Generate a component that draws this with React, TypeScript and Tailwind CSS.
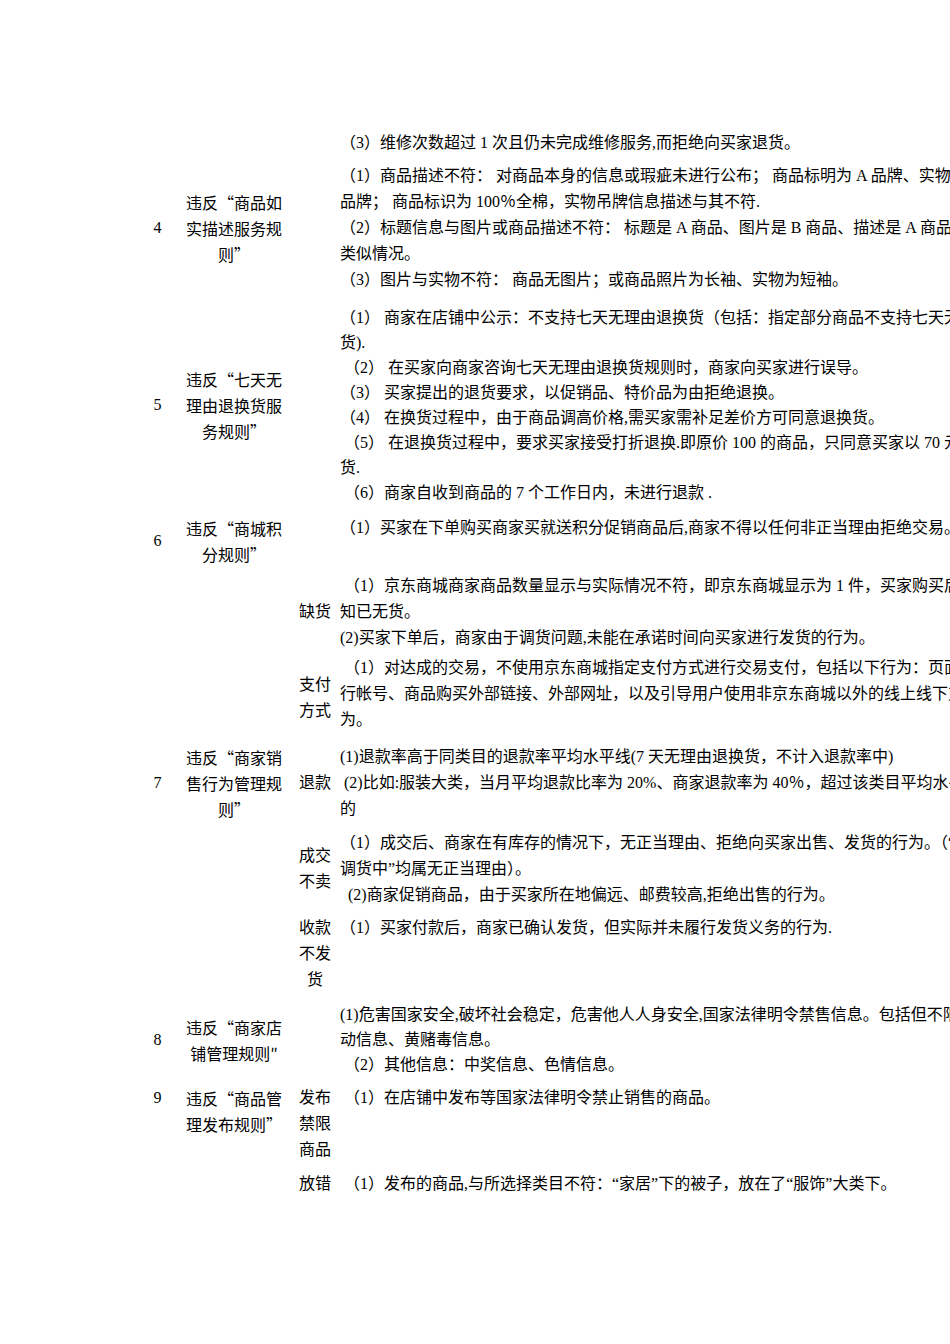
import React from 'react';

// one table row: number | rule name | (sub label | lines)...
type Group = {
  label?: string[];
  labelClass?: string;
  lines: string[];
  lh?: string;
  gap?: string;
  top?: boolean;
};

function Lines({ lines, lh = 'leading-[26px]' }: { lines: string[]; lh?: string }) {
  return (
    <div className="flex flex-col">
      {lines.map((t, i) => (
        <div key={i} className={`${lh} whitespace-pre`}>
          {t}
        </div>
      ))}
    </div>
  );
}

function Row({
  no,
  name,
  groups,
  gap,
  alignTop,
}: {
  no?: string;
  name?: string[];
  groups: Group[];
  gap: string;
  alignTop?: boolean;
}) {
  return (
    <div className={`flex ${gap}`}>
      <div className={`w-[35px] shrink-0 flex flex-col items-center ${alignTop ? 'justify-start' : 'justify-center'}`}>
        {no && <div className="leading-[26px]">{no}</div>}
      </div>
      <div
        className={`w-[118px] shrink-0 flex flex-col items-center text-center font-['Noto_Sans_CJK_SC',sans-serif] ${
          alignTop ? 'justify-start' : 'justify-center'
        }`}
      >
        {name && <Lines lines={name} />}
      </div>
      <div className="flex-1 min-w-0 flex flex-col">
        {groups.map((g, i) => (
          <div key={i} className={`flex ${g.gap ?? ''}`}>
            <div
              className={`w-[44px] shrink-0 flex flex-col items-center text-center ${
                g.top ? 'justify-start' : 'justify-center'
              } ${g.labelClass ?? ''}`}
            >
              {g.label && <Lines lines={g.label} />}
            </div>
            <div className="pl-[3px] flex flex-col self-start">
              <Lines lines={g.lines} lh={g.lh} />
            </div>
          </div>
        ))}
      </div>
    </div>
  );
}

export default function App() {
  return (
    <div className="w-[950px] min-h-[1344px] bg-white overflow-hidden text-[16px] text-black font-['Liberation_Serif','Noto_Sans_CJK_SC',serif]">
      <div className="pt-[130px] pl-[140px] flex flex-col">
        <Row
          gap="mt-0"
          groups={[{ lines: ['（3）维修次数超过 1 次且仍未完成维修服务,而拒绝向买家退货。'] }]}
        />

        <Row
          gap="mt-[7px]"
          no="4"
          name={['违反“商品如', '实描述服务规', '则”']}
          groups={[
            {
              lines: [
                '（1）商品描述不符： 对商品本身的信息或瑕疵未进行公布； 商品标明为 A 品牌、实物是 B',
                '品牌； 商品标识为 100％全棉，实物吊牌信息描述与其不符.',
                '（2）标题信息与图片或商品描述不符： 标题是 A 商品、图片是 B 商品、描述是 A 商品的其他',
                '类似情况。',
                '（3）图片与实物不符： 商品无图片；或商品照片为长袖、实物为短袖。',
              ],
            },
          ]}
        />

        <Row
          gap="mt-[12px]"
          no="5"
          name={['违反“七天无', '理由退换货服', '务规则”']}
          groups={[
            {
              lh: 'leading-[25px]',
              lines: [
                '（1） 商家在店铺中公示：不支持七天无理由退换货（包括：指定部分商品不支持七天无理由退换',
                '货).',
                ' （2） 在买家向商家咨询七天无理由退换货规则时，商家向买家进行误导。',
                '（3） 买家提出的退货要求，以促销品、特价品为由拒绝退换。',
                '（4） 在换货过程中，由于商品调高价格,需买家需补足差价方可同意退换货。',
                ' （5） 在退换货过程中，要求买家接受打折退换.即原价 100 的商品，只同意买家以 70 元退',
                '货.',
                ' （6）商家自收到商品的 7 个工作日内，未进行退款 .',
              ],
            },
          ]}
        />

        <Row
          gap="mt-[10px]"
          no="6"
          name={['违反“商城积', '分规则”']}
          groups={[{ lines: ['（1）买家在下单购买商家买就送积分促销商品后,商家不得以任何非正当理由拒绝交易。'] }]}
        />

        <Row
          gap="mt-[6px]"
          no="7"
          name={['违反“商家销', '售行为管理规', '则”']}
          groups={[
            {
              label: ['缺货'],
              lines: [
                ' （1）京东商城商家商品数量显示与实际情况不符，即京东商城显示为 1 件，买家购买后被告',
                '知已无货。',
                '(2)买家下单后，商家由于调货问题,未能在承诺时间向买家进行发货的行为。',
              ],
            },
            {
              gap: 'mt-[4px]',
              label: ['支付', '方式'],
              labelClass: 'pt-[8px]',
              lines: [
                ' （1）对达成的交易，不使用京东商城指定支付方式进行交易支付，包括以下行为：页面上公布银',
                '行帐号、商品购买外部链接、外部网址，以及引导用户使用非京东商城以外的线上线下支付行',
                '为。',
              ],
            },
            {
              gap: 'mt-[11px]',
              label: ['退款'],
              lines: [
                '(1)退款率高于同类目的退款率平均水平线(7 天无理由退换货，不计入退款率中)',
                ' (2)比如:服装大类，当月平均退款比率为 20%、商家退款率为 40％，超过该类目平均水平线',
                '的',
              ],
            },
            {
              gap: 'mt-[8px]',
              label: ['成交', '不卖'],
              lines: [
                '（1）成交后、商家在有库存的情况下，无正当理由、拒绝向买家出售、发货的行为。（“缺货”、“',
                '调货中”均属无正当理由）。',
                '  (2)商家促销商品，由于买家所在地偏远、邮费较高,拒绝出售的行为。',
              ],
            },
            {
              gap: 'mt-[7px]',
              label: ['收款', '不发', '货'],
              lines: ['（1）买家付款后，商家已确认发货，但实际并未履行发货义务的行为.'],
            },
          ]}
        />

        <Row
          gap="mt-[9px]"
          no="8"
          name={['违反“商家店', '铺管理规则″']}
          groups={[
            {
              lh: 'leading-[25px]',
              lines: [
                '(1)危害国家安全,破坏社会稳定，危害他人人身安全,国家法律明令禁售信息。包括但不限于反',
                '动信息、黄赌毒信息。',
                ' （2）其他信息：中奖信息、色情信息。',
              ],
            },
          ]}
        />

        <Row
          gap="mt-[8px]"
          no="9"
          alignTop
          name={['违反“商品管', '理发布规则”']}
          groups={[
            {
              top: true,
              label: ['发布', '禁限', '商品'],
              lines: [' （1）在店铺中发布等国家法律明令禁止销售的商品。'],
            },
            {
              gap: 'mt-[8px]',
              label: ['放错'],
              lines: [' （1）发布的商品,与所选择类目不符：“家居”下的被子，放在了“服饰”大类下。'],
            },
          ]}
        />
      </div>
    </div>
  );
}
